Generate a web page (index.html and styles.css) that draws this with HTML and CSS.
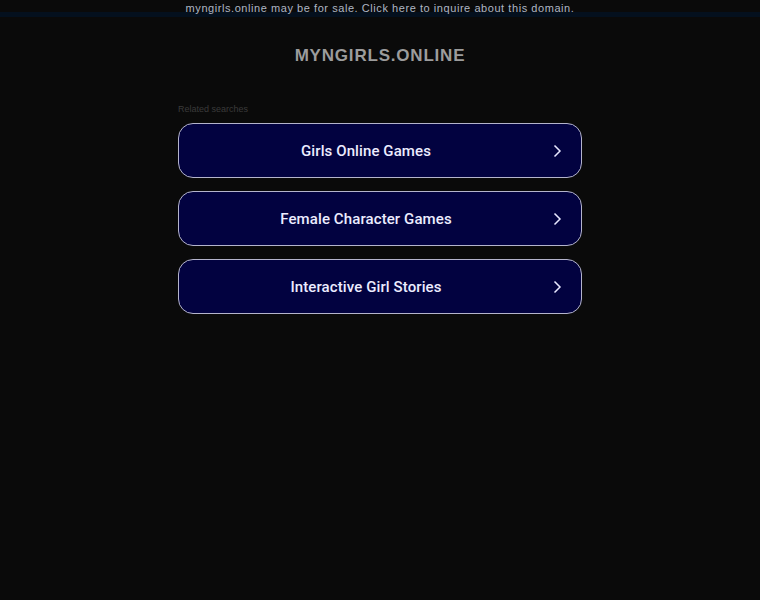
FILE: index.html
```html
<!DOCTYPE html>
<html>
<head>
<meta charset="utf-8">
<link rel="stylesheet" href="styles.css">
</head>
<body>
<div class="topbar"><a class="sale" href="#">myngirls.online may be for sale. Click here to inquire about this domain.</a></div>
<h1 class="domain">MYNGIRLS.ONLINE</h1>
<div class="content">
  <div class="related">Related searches</div>
  <a class="item" href="#"><span class="label">Girls Online Games</span><svg class="chev" viewBox="0 0 10 14" width="10" height="14"><path d="M2.5 1.5 L8 7 L2.5 12.5" fill="none" stroke="#e8e8ff" stroke-width="1.5"/></svg></a>
  <a class="item" href="#"><span class="label">Female Character Games</span><svg class="chev" viewBox="0 0 10 14" width="10" height="14"><path d="M2.5 1.5 L8 7 L2.5 12.5" fill="none" stroke="#e8e8ff" stroke-width="1.5"/></svg></a>
  <a class="item" href="#"><span class="label">Interactive Girl Stories</span><svg class="chev" viewBox="0 0 10 14" width="10" height="14"><path d="M2.5 1.5 L8 7 L2.5 12.5" fill="none" stroke="#e8e8ff" stroke-width="1.5"/></svg></a>
</div>
</body>
</html>
```

FILE: styles.css
```css
html, body {
  margin: 0;
  padding: 0;
  background: #0a0a0a;
  font-family: "Liberation Sans", Arial, sans-serif;
}
.topbar {
  height: 12px;
  border-bottom: 5px solid #04101e;
  text-align: center;
  line-height: 13px;
}
.sale {
  color: #aeb6c4;
  font-size: 11px;
  letter-spacing: 0.56px;
  text-decoration: none;
}
.domain {
  margin: 29px 0 0;
  text-align: center;
  color: #9c9c9c;
  font-size: 17px;
  font-weight: bold;
  letter-spacing: 0.8px;
  line-height: 20px;
}
.content {
  width: 404px;
  margin: 0 auto;
  padding-top: 37px;
  display: flex;
  flex-direction: column;
  gap: 13px;
}
.related {
  color: #3a3a3a;
  font-size: 9px;
  line-height: 12px;
  margin-bottom: -5px;
}
.item {
  height: 53px;
  border: 1px solid #b4b4cc;
  border-radius: 15px;
  background: #020240;
  display: flex;
  align-items: center;
  justify-content: center;
  padding-right: 28px;
  position: relative;
  text-decoration: none;
}
.label {
  color: #ececff;
  font-family: Roboto, "Liberation Sans", sans-serif;
  font-size: 15px;
  font-weight: 500;
  letter-spacing: 0.1px;
}
.chev {
  position: absolute;
  right: 19px;
  top: 20px;
}
```
